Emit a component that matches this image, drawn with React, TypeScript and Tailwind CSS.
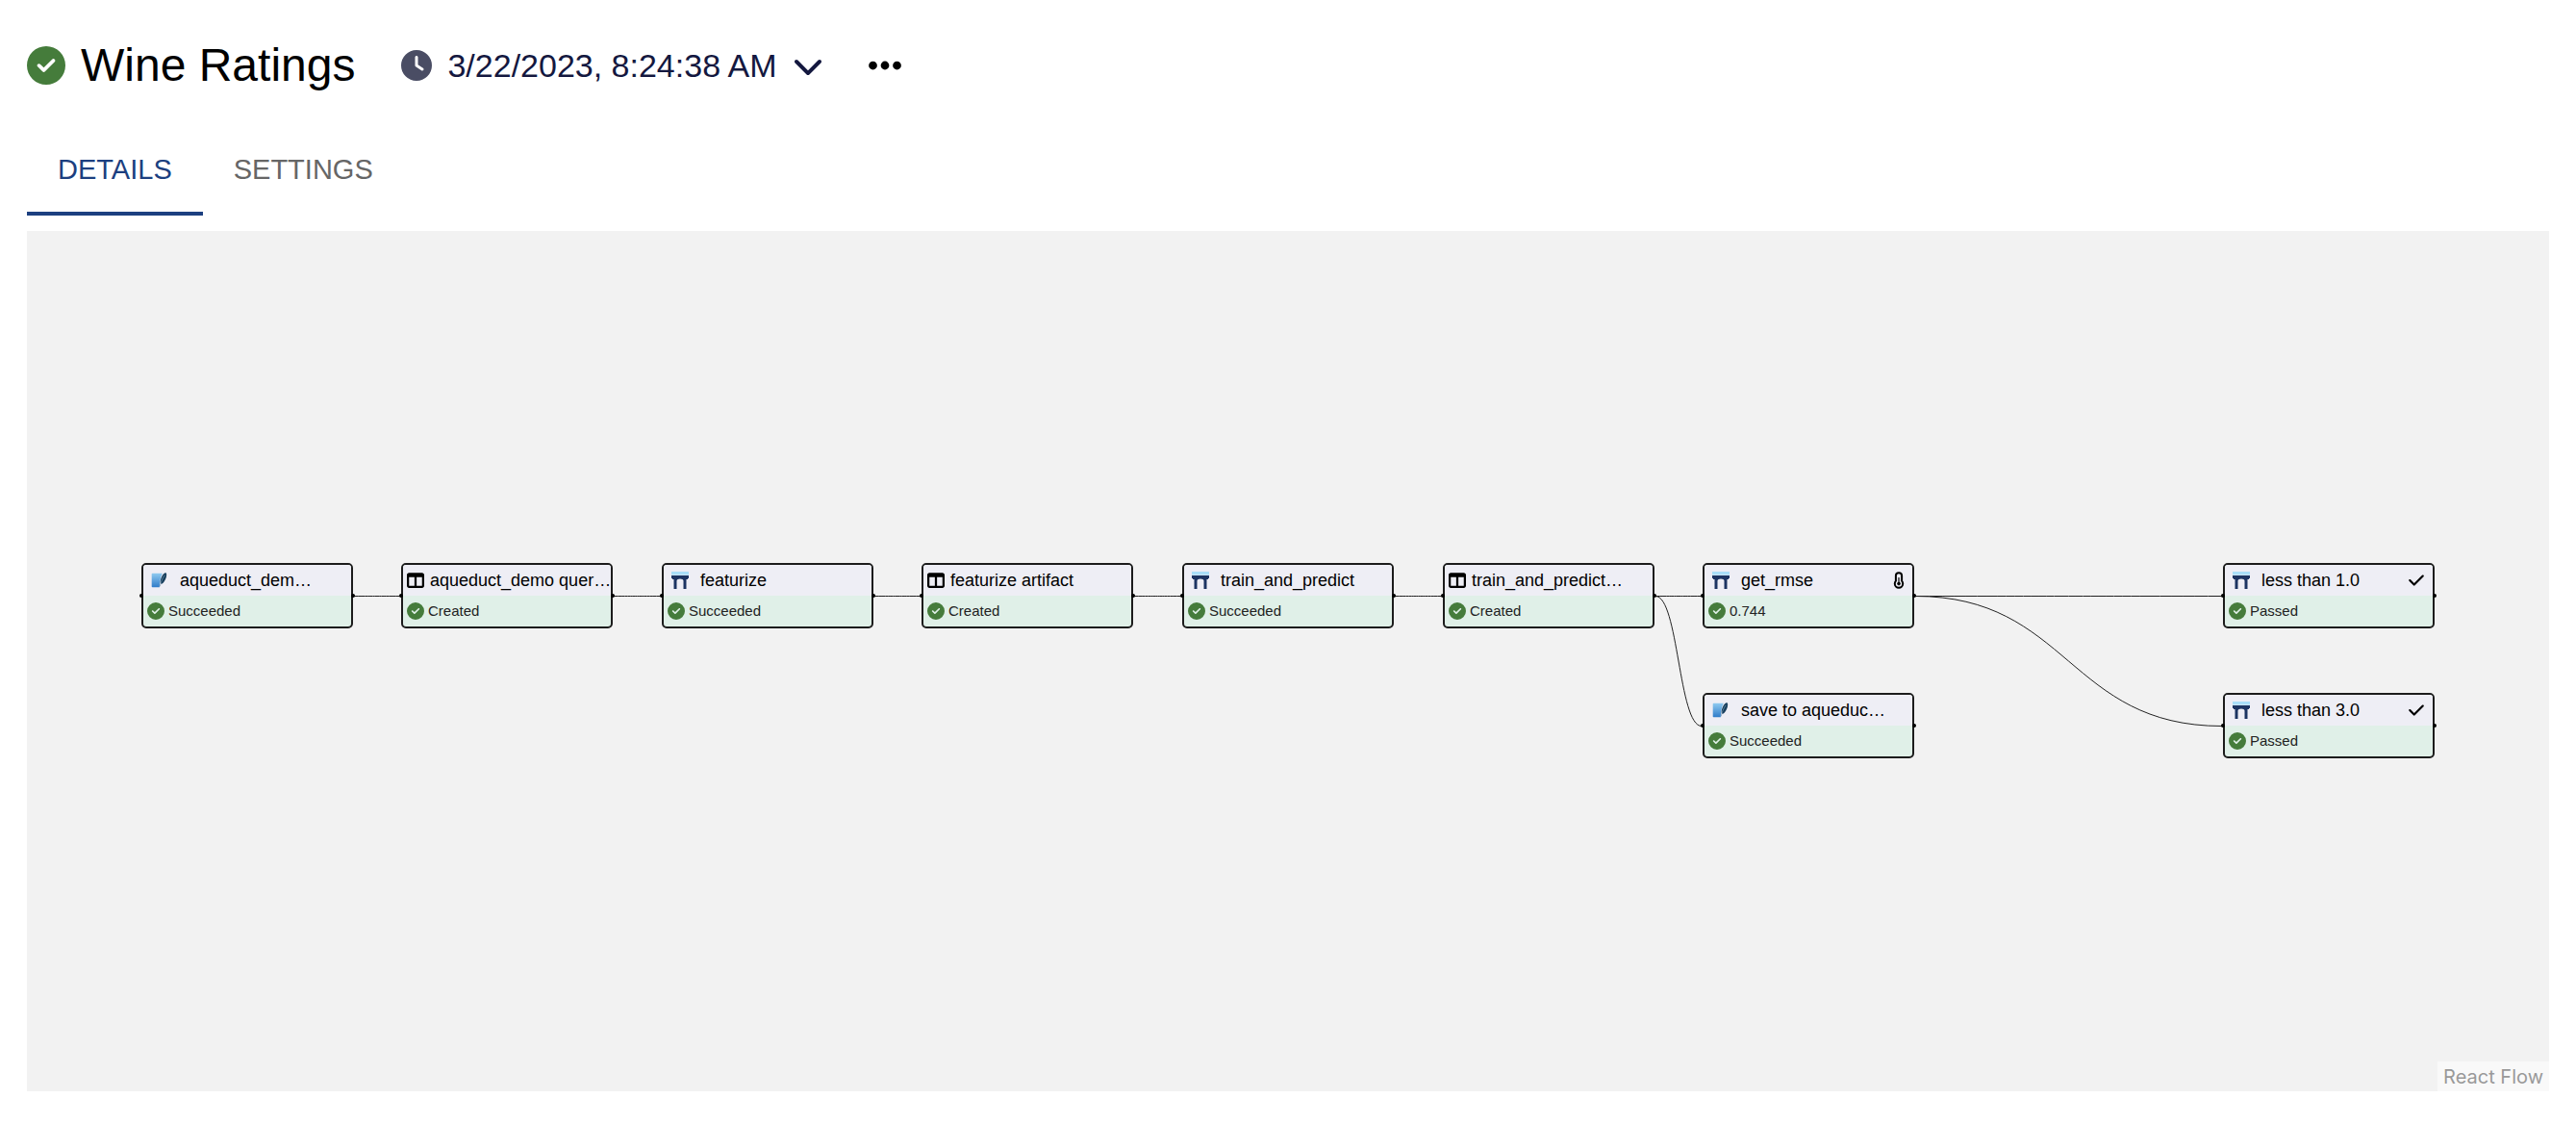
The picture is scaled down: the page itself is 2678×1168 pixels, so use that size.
import React from "react";
import {
  FaCheck,
  FaChevronDown,
  FaCircleCheck,
  FaClock,
  FaEllipsis,
  FaTableColumns,
} from "react-icons/fa6";

type Kind = "database" | "function" | "artifact";

interface FlowNode {
  id: string;
  label: string;
  status: string;
  kind: Kind;
  x: number;
  y: number;
  badge?: "metric" | "check";
}

const NODE_WIDTH = 220;
const NODE_MIDDLE = 34;

const nodes: FlowNode[] = [
  { id: "source", label: "aqueduct_dem…", status: "Succeeded", kind: "database", x: 0, y: 0 },
  { id: "query", label: "aqueduct_demo quer…", status: "Created", kind: "artifact", x: 270, y: 0 },
  { id: "featurize", label: "featurize", status: "Succeeded", kind: "function", x: 541, y: 0 },
  { id: "features", label: "featurize artifact", status: "Created", kind: "artifact", x: 811, y: 0 },
  { id: "train", label: "train_and_predict", status: "Succeeded", kind: "function", x: 1082, y: 0 },
  { id: "predictions", label: "train_and_predict…", status: "Created", kind: "artifact", x: 1353, y: 0 },
  { id: "rmse", label: "get_rmse", status: "0.744", kind: "function", x: 1623, y: 0, badge: "metric" },
  { id: "save", label: "save to aqueduc…", status: "Succeeded", kind: "database", x: 1623, y: 135 },
  { id: "lt1", label: "less than 1.0", status: "Passed", kind: "function", x: 2164, y: 0, badge: "check" },
  { id: "lt3", label: "less than 3.0", status: "Passed", kind: "function", x: 2164, y: 135, badge: "check" },
];

const edges: [string, string][] = [
  ["source", "query"],
  ["query", "featurize"],
  ["featurize", "features"],
  ["features", "train"],
  ["train", "predictions"],
  ["predictions", "rmse"],
  ["predictions", "save"],
  ["rmse", "lt1"],
  ["rmse", "lt3"],
];

function edgePath(from: string, to: string) {
  const a = nodes.find((n) => n.id === from)!;
  const b = nodes.find((n) => n.id === to)!;
  const x1 = a.x + NODE_WIDTH + 1;
  const x2 = b.x - 1;
  const y1 = a.y + NODE_MIDDLE + 0.5;
  const y2 = b.y + NODE_MIDDLE + 0.5;
  const mid = (x1 + x2) / 2;
  return `M${x1},${y1} C${mid},${y1} ${mid},${y2} ${x2},${y2}`;
}

function DatabaseIcon() {
  return (
    <svg viewBox="0 0 18 18" className="size-[18px]" aria-hidden="true">
      <defs>
        <linearGradient id="sheet" x1="0" y1="0" x2="0" y2="1">
          <stop offset="0" stopColor="#8fcaf0" />
          <stop offset="1" stopColor="#2f7cc9" />
        </linearGradient>
      </defs>
      <path
        d="M1.500 1.800h10.500C10.300 4.500 9.200 9 8.800 16.200H1.500a.8.8 0 0 1-.8-.8V2.600a.8.8 0 0 1 .8-.8z"
        fill="url(#sheet)"
      />
      <ellipse cx="12.900" cy="7" rx="2.300" ry="6.200" transform="rotate(24 12.900 7)" fill="#173e5c" />
      <path d="M14.300 3.600C12 6.800 10 11 9.200 15.400" stroke="#6f93af" strokeWidth=".7" fill="none" />
    </svg>
  );
}

function AqueductIcon() {
  return (
    <svg viewBox="0 0 18 18" className="size-[18px]" aria-hidden="true">
      <path d="M0 0h18v3.500H0z" fill="#a9def9" />
      <path
        d="M0 4h18v3h-1v1h-1.500v10h-3V9.500c0-1.200-1.500-2-3.500-2s-3.500.8-3.500 2V18h-3V8H1V7H0z"
        fill="#1c3462"
      />
    </svg>
  );
}

function ThermometerIcon() {
  return (
    <svg viewBox="0 0 12 18" className="ml-auto h-[18px] w-3 shrink-0" aria-hidden="true">
      <path
        d="M2.900 4.300a3.100 3.100 0 0 1 6.200 0v5.400c.7.800 1.100 1.700 1.100 2.800a4.200 4.200 0 0 1-8.400 0c0-1.100.4-2 1.100-2.800z"
        fill="none"
        stroke="#000"
        strokeWidth="2"
      />
      <path d="M6 6.500v6" stroke="#000" strokeWidth="1.200" strokeLinecap="round" />
      <circle cx="6" cy="12.600" r="1.800" fill="#000" />
    </svg>
  );
}

function FlowCard({ node }: { node: FlowNode }) {
  return (
    <div
      className="absolute h-[68px] w-[220px] rounded-[5px] border-2 border-[#1c1c1c] bg-[#e0f0e8] text-black"
      style={{ left: node.x, top: node.y }}
    >
      <div className="flex h-8 items-center rounded-t-[3px] bg-[#eeeef5] pr-2 pl-1 text-[18px] leading-6">
        {node.kind === "artifact" ? (
          <FaTableColumns className="size-[18px] shrink-0" />
        ) : (
          <span className="ml-1 shrink-0">
            {node.kind === "database" ? <DatabaseIcon /> : <AqueductIcon />}
          </span>
        )}
        <span
          className={
            node.kind === "artifact" ? "ml-1.5 whitespace-nowrap" : "ml-3 whitespace-nowrap"
          }
        >
          {node.label}
        </span>
        {node.badge === "metric" && <ThermometerIcon />}
        {node.badge === "check" && <FaCheck className="ml-auto size-[18px] shrink-0" />}
      </div>
      <div className="flex h-8 items-center gap-1 pl-1 text-[15px] leading-5 text-[#222]">
        <FaCircleCheck className="size-[18px] shrink-0 text-[#457c3b]" />
        <span>{node.status}</span>
      </div>
      <span className="absolute top-[30px] -left-1 size-1 rounded-full bg-black" />
      <span className="absolute top-[30px] -right-1 size-1 rounded-full bg-black" />
    </div>
  );
}

export default function App() {
  return (
    <div className='flex min-h-screen flex-col bg-white px-7 pb-[34px] font-["Liberation_Sans",Arial,sans-serif]'>
      <header className="flex items-center pt-11">
        <FaCircleCheck className="size-10 text-[#457c3b]" />
        <h1 className="ml-4 text-[48px] leading-12 text-black">Wine Ratings</h1>
        <button type="button" className="ml-12 flex items-center text-[#14183f]">
          <FaClock className="size-8 text-[#4a4d64]" />
          <span className="ml-4 text-[34px] leading-10">3/22/2023, 8:24:38 AM</span>
          <FaChevronDown className="ml-4 size-8" />
        </button>
        <button type="button" aria-label="More options" className="ml-11 text-black">
          <FaEllipsis className="size-10" />
        </button>
      </header>

      <nav className="mt-9 flex text-[29px] leading-10" role="tablist">
        <button
          type="button"
          role="tab"
          aria-selected="true"
          className="border-b-4 border-[#1c3f80] px-8 pt-7 pb-6 text-[#1c3f80]"
        >
          DETAILS
        </button>
        <button
          type="button"
          role="tab"
          aria-selected="false"
          className="border-b-4 border-transparent px-8 pt-7 pb-6 text-[#666]"
        >
          SETTINGS
        </button>
      </nav>

      <main className="relative mt-4 flex flex-1 items-center justify-center overflow-hidden bg-[#f2f2f2]">
        <div className="relative h-[204px] w-[2384px] shrink-0">
          <svg className="absolute inset-0 size-full overflow-visible" aria-hidden="true">
            {edges.map(([from, to]) => (
              <path
                key={from + to}
                d={edgePath(from, to)}
                fill="none"
                stroke="#222"
                strokeWidth="1"
              />
            ))}
          </svg>
          {nodes.map((node) => (
            <FlowCard key={node.id} node={node} />
          ))}
        </div>
        <a
          href="https://reactflow.dev"
          className="absolute right-0 bottom-0 bg-[#f9f9f9] px-[6px] pt-1 pb-[3px] font-[Inter,sans-serif] text-[20px] leading-6 text-[#999]"
        >
          React Flow
        </a>
      </main>
    </div>
  );
}
